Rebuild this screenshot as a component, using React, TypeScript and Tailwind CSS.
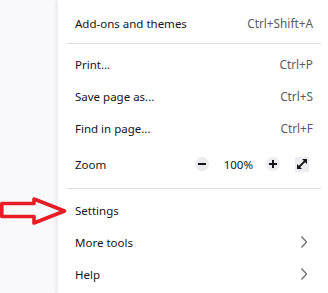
import React from 'react';

const font = { fontFamily: '"Noto Sans", "Open Sans", sans-serif' };

const Row = ({ label, shortcut, chevron }: { label: string; shortcut?: string; chevron?: boolean }) => (
  <div className="h-8 flex items-center justify-between pl-[17px] pr-[15px]">
    <span className="text-[11.5px] text-[#15141a] pt-px">{label}</span>
    {shortcut && <span className="text-[11.8px] text-[#5b5b66] pt-px">{shortcut}</span>}
    {chevron && (
      <svg width="8" height="12" viewBox="0 0 8 12" className="mr-[5px]">
        <polyline points="1.5,0.5 6.5,6 1.5,11.5" fill="none" stroke="#6e6e75" strokeWidth="1.3" />
      </svg>
    )}
  </div>
);

const Sep = ({ className }: { className: string }) => (
  <div className={`h-px bg-[#e0e0e6] ml-[9px] mr-[7px] ${className}`} />
);

export default function App() {
  return (
    <div className="relative w-[328px] h-[293px] bg-[#f9f9fb] flex overflow-hidden" style={font}>
      <div className="w-[58px] shrink-0" />
      <div className="flex-1 bg-white shadow-[-2px_0_4px_rgba(0,0,0,0.07)] pt-[7px]">
        <Row label="Add-ons and themes" shortcut="Ctrl+Shift+A" />
        <Sep className="mt-1 mb-1" />
        <Row label="Print..." shortcut="Ctrl+P" />
        <Row label="Save page as..." shortcut="Ctrl+S" />
        <Row label="Find in page..." shortcut="Ctrl+F" />
        <div className="h-10 flex items-center justify-between pl-[17px] pr-[19px]">
          <span className="text-[11.5px] text-[#15141a] pt-px">Zoom</span>
          <div className="flex items-center">
            <div className="w-[14px] h-[14px] rounded-full bg-[#ececef] flex items-center justify-center">
              <div className="w-[8px] h-[1.5px] bg-[#15141a]" />
            </div>
            <span className="text-[11.5px] text-[#15141a] ml-[15px] mr-[13px] pt-px">100%</span>
            <div className="w-[14px] h-[14px] rounded-full bg-[#ececef] flex items-center justify-center relative">
              <div className="w-[8px] h-[1.5px] bg-[#15141a]" />
              <div className="absolute w-[1.5px] h-[8px] bg-[#15141a]" />
            </div>
            <div className="ml-[15px] w-[14px] h-[15px] bg-[#ececef] flex items-center justify-center">
              <svg width="12" height="12" viewBox="0 0 12 12">
                <line x1="3" y1="9" x2="9" y2="3" stroke="#15141a" strokeWidth="1.8" />
                <polygon points="11,1 11,6 6,1" fill="#15141a" />
                <polygon points="1,11 1,6 6,11" fill="#15141a" />
              </svg>
            </div>
          </div>
        </div>
        <Sep className="mt-1 mb-[5px]" />
        <Row label="Settings" />
        <Row label="More tools" chevron />
        <Row label="Help" chevron />
      </div>
      <svg className="absolute left-0 top-[196px]" width="70" height="30" viewBox="0 196 70 30">
        <polygon
          points="1.8,203.5 34,203.5 34,199 64.5,211 34,223 34,216.5 1.8,216.5"
          fill="none"
          stroke="#e81c24"
          strokeWidth="3.6"
          strokeLinejoin="round"
        />
      </svg>
    </div>
  );
}
